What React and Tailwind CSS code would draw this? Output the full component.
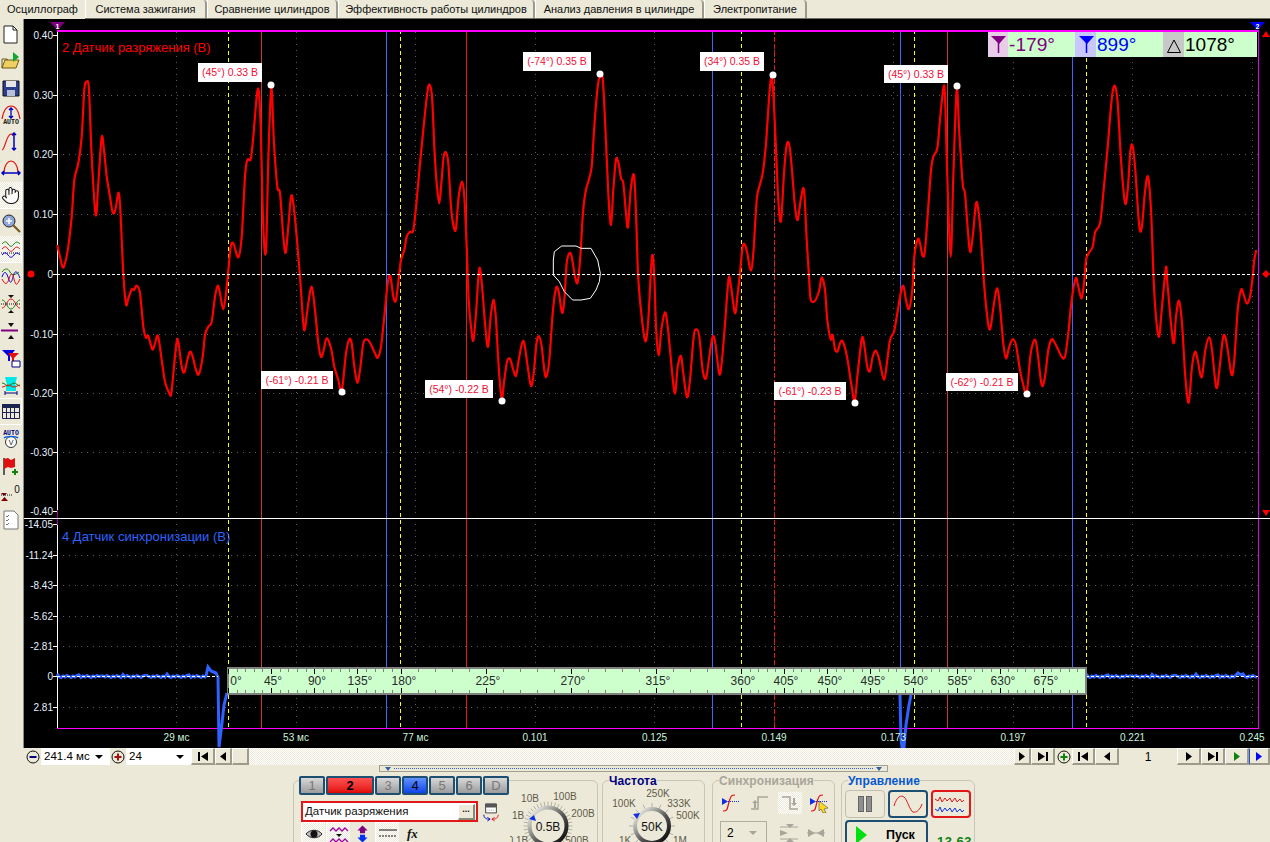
import { Hand } from 'lucide-react'

// raw points were read from 3x crops, so convert back to page pixels
const crop = (ox, pts) => {
  const out = []
  for (let i = 0; i < pts.length; i += 2) out.push([ox + pts[i] / 3, 60 + pts[i + 1] / 3])
  return out
}

// catmull-rom through the sampled points, the scope draws a smoothed line
const smooth = (pts) => {
  let d = `M${pts[0][0]} ${pts[0][1]}`
  for (let i = 0; i < pts.length - 1; i++) {
    const p0 = pts[i - 1] || pts[i]
    const p1 = pts[i]
    const p2 = pts[i + 1]
    const p3 = pts[i + 2] || p2
    const c1x = p1[0] + (p2[0] - p0[0]) / 6
    const c1y = p1[1] + (p2[1] - p0[1]) / 6
    const c2x = p2[0] - (p3[0] - p1[0]) / 6
    const c2y = p2[1] - (p3[1] - p1[1]) / 6
    d += `C${c1x.toFixed(1)} ${c1y.toFixed(1)} ${c2x.toFixed(1)} ${c2y.toFixed(1)} ${p2[0].toFixed(1)} ${p2[1].toFixed(1)}`
  }
  return d
}

const CYCLE_A = [52,555,60,590,68,622,75,610,85,560,95,470,103,360,115,310,125,230,133,90,140,65,147,90,155,290,167,465,175,370,185,232,192,270,200,350,210,410,218,457,226,450,236,398,242,470,250,640,258,733,265,715,275,688,282,690,290,677,300,700,310,800,318,833,325,828,337,868,345,850,354,828,365,900,375,965,388,1000,394,1000,402,920,410,845,415,845,425,920,433,937,442,900,450,875,458,890,468,930,477,942,488,890,495,825,505,800,515,785,525,710,533,677,540,700,550,748,558,700,566,620,572,560,580,550,595,592,605,530,615,350,622,300,632,297,640,230,650,110,656,93,662,200,670,500,678,572,685,300,694,85,702,250,712,380,720,400,730,530,737,578,745,500,753,410,760,430,770,530,780,650,790,790,795,805,805,730,815,680,825,750,835,850,843,890,850,875,860,835,873,865,883,920,895,960,905,995,918,880,928,838,935,850,943,920,952,968,960,930,970,850,980,838,990,848,1005,880,1013,893,1023,860,1033,770,1043,670,1051,648,1060,710,1068,720,1078,640]
const CYCLE_B = [15,600,25,570,32,530,42,515,52,510,62,420,72,310,85,180,95,90,101,75,108,110,115,260,122,370,130,430,136,370,143,290,150,278,157,310,165,440,173,500,180,505,188,410,198,365,205,410,212,560,218,720,225,800,232,842,240,760,248,640,253,630,260,700,268,800,276,860,284,770,293,720,300,780,308,920,317,1015,325,960,333,905,342,897,352,930,360,947,368,900,378,850,385,850,395,920,405,978,413,940,422,845,430,830,437,860,445,930,451,950,460,900,470,760,480,685,488,695,498,758,505,720,512,610,520,580,527,590,537,650,545,667,553,590,560,470,568,400,578,360,587,320,595,200,605,80,612,50,620,55,628,200,637,400,645,495,652,390,660,298,668,312,675,355,682,370,690,460,696,500,704,390,714,345,720,460,726,640,733,730,743,820,750,842,757,780,768,590,775,650,780,800,788,885,796,810,807,757,815,800,822,870,836,1000,845,920,855,888,862,940,873,1012,882,960,893,830,902,808,910,830,920,930,930,955,940,890,950,830,958,850,970,942,978,900,988,780,998,655,1005,680,1017,760,1025,700]
const CYCLE_C = [0,640,8,560,15,555,22,580,32,632,40,580,50,420,58,380,68,340,78,250,90,80,97,60,105,200,115,420,123,482,132,340,140,255,148,255,155,320,165,440,173,480,182,420,192,390,200,540,207,650,212,718,225,722,238,690,245,652,255,690,262,780,272,838,278,825,285,868,293,873,302,845,310,848,322,895,335,980,344,1025,352,950,365,838,372,850,382,920,390,933,398,890,408,872,418,900,432,960,442,900,450,840,462,815,472,760,482,700,490,677,498,720,507,747,517,690,523,590,533,538,540,550,548,588,555,570,565,440,573,330,580,290,592,265,600,180,610,85,615,110,622,350,632,590,640,350,650,90,658,220,668,370,675,400,682,490,690,575,698,530,708,430,715,450,722,520,733,680,745,795,752,800,762,730,772,685,780,740,790,850,798,895,808,860,818,838,828,855,840,930,850,975,860,1000,872,880,885,838,893,880,905,975,915,950,925,870,935,838,945,850,955,870,965,890,975,890,985,820,995,720,1007,655,1015,680,1025,715,1033,660]
const CYCLE_D = [0,600,8,580,20,560,28,515,42,490,52,400,65,260,78,110,87,78,95,130,105,300,117,428,125,390,133,275,140,258,148,330,160,498,168,498,177,395,186,350,195,450,205,700,218,830,228,740,240,622,245,680,262,848,270,770,279,722,288,790,298,950,308,1028,318,920,327,875,335,900,347,952,358,870,369,832,378,870,391,983,400,930,410,840,417,827,425,870,437,945,445,900,455,750,465,690,472,700,482,730,492,710,500,650,505,600,511,570]
const GESTURE = [472,600,475,575,497,558,540,558,555,565,585,565,605,600,613,640,610,665,600,690,583,715,555,720,530,720,505,695,490,665,472,645,472,600]

const trace = smooth([...crop(40, CYCLE_A), ...crop(396, CYCLE_B), ...crop(740, CYCLE_C), ...crop(1086, CYCLE_D)])
const gesture = crop(396, GESTURE).map((p) => p.join(',')).join(' ')

const noise = (from, to) => {
  const pts = []
  for (let x = from, i = 0; x < to; x += 2, i++) pts.push(`${x},${676.5 + ((i * 7) % 5) * 0.5 - 1 + (i % 11 === 0 ? -1.5 : 0)}`)
  return pts
}
const syncLeft = [...noise(57, 206), '206,676', '208,667', '211,671', '216,673', '218,677', '219,747', '222,723', '224,705', '227,693'].join(' ')
const syncMid = '900,695 901,740 902,747 904,747 906,725 909,705 911,695'
const syncRight = [...noise(1086, 1236), '1236,675', '1238,673', '1241,675', ...noise(1243, 1258)].join(' ')

const Y_TOP = [['0.40', 35], ['0.30', 95.5], ['0.20', 154.5], ['0.10', 214], ['0', 274], ['-0.10', 334], ['-0.20', 393], ['-0.30', 452], ['-0.40', 511]]
const Y_BOTTOM = [['-14.05', 524], ['-11.24', 555], ['-8.43', 585], ['-5.62', 616], ['-2.81', 646], ['0', 676], ['2.81', 707]]
const X_AXIS = [['29 мс', 176.5], ['53 мс', 296], ['77 мс', 415.5], ['0.101', 535], ['0.125', 654.5], ['0.149', 774], ['0.173', 893.5], ['0.197', 1013], ['0.221', 1132.5], ['0.245', 1252]]
const MARKS = [
  { x: 198, y: 63, w: 64, h: 19, t: '(45°) 0.33 В', dx: 271, dy: 85 },
  { x: 261, y: 371, w: 72, h: 18, t: '(-61°) -0.21 В', dx: 342, dy: 392 },
  { x: 523, y: 52, w: 68, h: 19, t: '(-74°) 0.35 В', dx: 600, dy: 74 },
  { x: 425, y: 380, w: 68, h: 18, t: '(54°) -0.22 В', dx: 502, dy: 401 },
  { x: 700, y: 52, w: 64, h: 19, t: '(34°) 0.35 В', dx: 773, dy: 75 },
  { x: 774, y: 382, w: 72, h: 18, t: '(-61°) -0.23 В', dx: 855, dy: 403 },
  { x: 884, y: 65, w: 64, h: 18, t: '(45°) 0.33 В', dx: 957, dy: 86 },
  { x: 946, y: 373, w: 72, h: 18, t: '(-62°) -0.21 В', dx: 1027, dy: 394 },
]
const RULER = [['0°', 236], ['45°', 273], ['90°', 317], ['135°', 360], ['180°', 404], ['225°', 488], ['270°', 573], ['315°', 658], ['360°', 743], ['405°', 786], ['450°', 830], ['495°', 873], ['540°', 916], ['585°', 960], ['630°', 1003], ['675°', 1046]]

const rulerTicks = []
const addTicks = (start, step, n) => {
  for (let i = 0; i < n; i++) {
    for (let j = 0; j < 5; j++) rulerTicks.push({ x: Math.round(start + step * i + (step / 5) * j), major: j === 0 })
  }
}
addTicks(228, 43.1, 4)
addTicks(400.5, 85.2, 4)
addTicks(741, 43.1, 8)

function Chart() {
  return (
    <svg width="1246" height="729" viewBox="24 19 1246 729" className="block bg-black">
      <g shapeRendering="crispEdges">
        {Y_TOP.filter((r) => r[0] !== '0' && r[0] !== '0.40' && r[0] !== '-0.40').map((r) => (
          <line key={r[0]} x1="57" x2="1258" y1={r[1]} y2={r[1]} stroke="#5c5c5c" strokeDasharray="1 5" />
        ))}
        {Y_BOTTOM.filter((r) => r[0] !== '0' && r[0] !== '-14.05').map((r) => (
          <line key={r[0]} x1="57" x2="1258" y1={r[1]} y2={r[1]} stroke="#5c5c5c" strokeDasharray="1 5" />
        ))}
        {X_AXIS.map((r) => (
          <line key={r[0]} x1={r[1]} x2={r[1]} y1="32" y2="733" stroke="#5c5c5c" strokeDasharray="1 5" />
        ))}
        {[261.5, 947.5].map((x) => <line key={x} x1={x} x2={x} y1="30" y2="728" stroke="#c83838" />)}
        <line x1="466.5" x2="466.5" y1="30" y2="728" stroke="#e81818" />
        <line x1="774.5" x2="774.5" y1="30" y2="728" stroke="#e81818" strokeDasharray="5 2" />
        {[386.5, 712.5, 900.5, 1072.5].map((x) => <line key={x} x1={x} x2={x} y1="30" y2="728" stroke="#3a66ff" />)}
        {[228.5, 400.5, 741.5, 914.5, 1086.5].map((x) => <line key={x} x1={x} x2={x} y1="30" y2="728" stroke="#ffff00" strokeDasharray="4 3" />)}
        <line x1="57.5" x2="57.5" y1="30" y2="510" stroke="#fff" />
        <line x1="57.5" x2="57.5" y1="510" y2="525" stroke="#a000a0" />
        <line x1="57.5" x2="57.5" y1="525" y2="728" stroke="#fff" />
        <line x1="57" x2="1259" y1="30.5" y2="30.5" stroke="#ff00ff" strokeWidth="2" />
        <line x1="57" x2="1259" y1="728.5" y2="728.5" stroke="#ff00ff" />
        <line x1="1258.5" x2="1258.5" y1="30" y2="729" stroke="#e000ff" strokeWidth="1" />
        <line x1="24" x2="1270" y1="518.5" y2="518.5" stroke="#fff" />
        {Y_TOP.map((r) => <line key={r[0]} x1="53" x2="57" y1={r[1]} y2={r[1]} stroke="#fff" />)}
        {Y_BOTTOM.map((r) => <line key={r[0]} x1="53" x2="57" y1={r[1]} y2={r[1]} stroke="#fff" />)}
      </g>

      <path d={trace} fill="none" stroke="#ff0000" strokeWidth="2.2" strokeLinejoin="round" />
      <polyline points={gesture} fill="none" stroke="#fff" strokeWidth="1" />
      <line x1="57" x2="1258" y1="274" y2="274" stroke="#fff" strokeWidth="1" strokeDasharray="3 2" shapeRendering="crispEdges" />

      <polyline points={syncLeft} fill="none" stroke="#2f62ff" strokeWidth="3" />
      <polyline points={syncMid} fill="none" stroke="#2f62ff" strokeWidth="3" />
      <polyline points={syncRight} fill="none" stroke="#2f62ff" strokeWidth="3" />
      <line x1="57" x2="218" y1="676.5" y2="676.5" stroke="#fff" strokeDasharray="3 2" shapeRendering="crispEdges" />
      <line x1="1086" x2="1258" y1="676.5" y2="676.5" stroke="#fff" strokeDasharray="3 2" shapeRendering="crispEdges" />

      {/* degree ruler sits on top of the traces */}
      <rect x="228" y="668" width="858" height="26" fill="#ccffcc" stroke="#808080" strokeWidth="2" />
      <g shapeRendering="crispEdges">
        {rulerTicks.map((t) => (
          <g key={t.x} stroke={t.major ? '#000' : '#808080'}>
            <line x1={t.x} x2={t.x} y1="669" y2={t.major ? 674 : 672} />
            <line x1={t.x} x2={t.x} y1={t.major ? 688 : 690} y2="693" />
          </g>
        ))}
      </g>
      {RULER.map((r) => (
        <text key={r[0]} x={r[1]} y="685" fontSize="12" textAnchor="middle" fill="#2a2a2a">{r[0]}</text>
      ))}

      {Y_TOP.map((r) => <text key={r[0]} x="53" y={r[1] + 3.5} fontSize="10" textAnchor="end" fill="#e6f0ff">{r[0]}</text>)}
      {Y_BOTTOM.map((r) => <text key={r[0]} x="53" y={r[1] + 3.5} fontSize="10" textAnchor="end" fill="#e6f0ff">{r[0]}</text>)}
      {X_AXIS.map((r) => <text key={r[0]} x={r[1]} y="741" fontSize="10" textAnchor="middle" fill="#cdf2dc">{r[0]}</text>)}

      <text x="62" y="52" fontSize="13" fill="#ff0000">2 Датчик разряжения (В)</text>
      <text x="62" y="541" fontSize="13" fill="#2f62ff">4 Датчик синхронизации (В)</text>

      {MARKS.map((m) => (
        <g key={m.dx}>
          <rect x={m.x} y={m.y} width={m.w} height={m.h} fill="#fff" />
          <text x={m.x + m.w / 2} y={m.y + m.h / 2 + 3.5} fontSize="10.5" textAnchor="middle" fill="#f01038">{m.t}</text>
          <circle cx={m.dx} cy={m.dy} r="3.5" fill="#fff" />
        </g>
      ))}

      {/* channel and cursor markers */}
      <polygon points="50,22 65,22 57.5,30" fill="#800080" />
      <text x="57.5" y="29" fontSize="7" fontWeight="bold" textAnchor="middle" fill="#fff">1</text>
      <polygon points="1250,22 1265,22 1257.5,30" fill="#0000ff" />
      <text x="1257.5" y="29" fontSize="7" fontWeight="bold" textAnchor="middle" fill="#fff">2</text>
      <polygon points="1262,37 1270,37 1266,31" fill="#ff0000" />
      <polygon points="1262,510 1270,510 1266,516" fill="#ff0000" />
      <polygon points="1266,270 1270,274 1266,278 1262,274" fill="#ff0000" />
      <circle cx="31" cy="274" r="3.5" fill="#ff0000" />

      {/* angle readout */}
      <rect x="988" y="32" width="269" height="25" fill="#ccffcc" />
      <rect x="988" y="32" width="20" height="25" fill="#e8cce8" />
      <rect x="1075" y="32" width="21" height="25" fill="#c8c8ff" />
      <rect x="1163" y="32" width="21" height="25" fill="#c8c8c8" />
      <polygon points="991,36 1006,36 999,44" fill="#800080" />
      <line x1="998.5" x2="998.5" y1="42" y2="53" stroke="#800080" strokeWidth="1.5" />
      <polygon points="1079,36 1094,36 1087,44" fill="#0000ff" />
      <line x1="1086.5" x2="1086.5" y1="42" y2="53" stroke="#0000ff" strokeWidth="1.5" />
      <polygon points="1167.5,52.5 1180.5,52.5 1174,40" fill="none" stroke="#000" />
      <text x="1009" y="51" fontSize="18" fill="#800080" textLength="46" lengthAdjust="spacingAndGlyphs">-179°</text>
      <text x="1097" y="51" fontSize="19" fill="#0000ff">899°</text>
      <text x="1185" y="51" fontSize="19" fill="#000">1078°</text>
    </svg>
  )
}

const TABS = [
  ['Система зажигания', 'w-[122px]'],
  ['Сравнение цилиндров', 'w-[131px]'],
  ['Эффективность работы цилиндров', 'w-[197px]'],
  ['Анализ давления в цилиндре', 'w-[169px]'],
  ['Электропитание', 'w-[103px]'],
]

function Tabs() {
  return (
    <div className="flex h-[19px] text-[11px] text-[#111] border-b border-[#6f6f66]">
      <div className="w-[85px] h-[19px] flex items-center justify-center bg-[#ece9d8] z-10">Осциллограф</div>
      {TABS.map(([label, width]) => (
        <div key={label} className={`${width} h-[18px] flex items-center justify-center bg-[#ece9d8] border-l border-white border-r-2 border-r-[#9a9a8e] rounded-tr-sm`}>
          {label}
        </div>
      ))}
    </div>
  )
}

function Ico({ children, selected }) {
  return (
    <div className={`h-[27px] w-[22px] flex items-center justify-center ${selected ? "bg-[repeating-conic-gradient(#ece9d8_0_25%,#ffffff_0_50%)] bg-[length:2px_2px] border-r border-b border-white" : ''}`}>
      <svg width="20" height="20" viewBox="0 0 20 20" fill="none">{children}</svg>
    </div>
  )
}

function Toolbar() {
  return (
    <div className="w-[24px] h-[729px] shrink-0 flex flex-col pt-px border-r border-[#8c8c80] overflow-hidden">
      <Ico><path d="M3 2h9l4 4v13H3z" fill="#fff" stroke="#222" /><path d="M12 2v4h4" stroke="#222" /></Ico>
      <Ico><path d="M1 17l3-8h14l-3 8z" fill="#f0d060" stroke="#6b5a10" /><path d="M1 17V8h5l1 1" stroke="#6b5a10" /><path d="M12 1l6 5-6 5z" fill="#10a830" /></Ico>
      <Ico><path d="M2 3h16v15H2z" fill="#2b3f8f" stroke="#111" /><path d="M5 3h10v6H5z" fill="#e6e6e6" /><path d="M6 12h8v6H6z" fill="#b8c0d8" /></Ico>
      <Ico><path d="M1 14C3 3 7 1 10 1s7 2 9 13" stroke="#e01010" strokeWidth="1.2" /><path d="M10 3v10M8 5l2-2 2 2M8 11l2 2 2-2" stroke="#0000c0" strokeWidth="1.3" /><text x="10" y="19" fontSize="6.5" fontWeight="bold" textAnchor="middle" fill="#111" fontFamily="Liberation Mono">AUTO</text></Ico>
      <Ico><path d="M1 18C4 18 5 3 10 2c1 0 2 1 2 2" stroke="#e01010" strokeWidth="1.2" /><path d="M13 1v17M11 3l2-2 2 2M11 16l2 2 2-2" stroke="#0000c0" strokeWidth="1.5" /></Ico>
      <Ico><path d="M3 14C3 6 7 2 10 2s7 4 7 12" stroke="#e01010" strokeWidth="1.2" /><path d="M1 14h18M3 12l-2 2 2 2M17 12l2 2-2 2" stroke="#0000c0" strokeWidth="1.5" /></Ico>
      <div className="h-[27px] w-[22px] flex items-center justify-center bg-[repeating-conic-gradient(#ece9d8_0_25%,#ffffff_0_50%)] bg-[length:2px_2px] border-r border-b border-white">
        <Hand size={19} strokeWidth={1.3} color="#111" fill="#fff" />
      </div>
      <Ico><circle cx="8" cy="8" r="6" fill="#8fa6d8" stroke="#222" /><path d="M5 8h6M8 5v6" stroke="#fff" strokeWidth="1.5" /><path d="M12 12l7 7" stroke="#7a5a20" strokeWidth="2.2" /></Ico>
      <Ico selected><path d="M1 5c3-3 4-3 6 0s4 3 6 0 4-2 6 0" stroke="#108010" /><path d="M1 10c3-3 4-3 6 0s4 3 6 0 4-2 6 0" stroke="#e01010" /><path d="M0 14h20" stroke="#111" strokeDasharray="1 1" /><path d="M1 16c3-3 4-3 6 0s4 3 6 0 4-2 6 0" stroke="#0000e0" /></Ico>
      <Ico><path d="M1 5c3-4 6-4 8 0s5 3 9 0" stroke="#108010" /><path d="M1 10c2-6 4-6 6 0s3 8 5 0 4-6 7 1" stroke="#0000e0" /><path d="M1 12c3 6 5 6 7 0s3-8 5 0 3 6 6 0" stroke="#e01010" /></Ico>
      <Ico><path d="M7 1h6l-3 3zM7 19h6l-3-3z" fill="#111" /><path d="M1 6c4 0 5 9 9 9s5-9 9-9" stroke="#108010" /><path d="M1 14c4 0 5-9 9-9s5 9 9 9" stroke="#e01010" /><path d="M0 10h20" stroke="#111" strokeDasharray="1 1" /></Ico>
      <Ico><path d="M7 2h6l-3 4zM7 18h6l-3-4z" fill="#111" /><path d="M0 9.500h17" stroke="#800080" strokeWidth="2" /></Ico>
      <Ico><path d="M1 2h13l-5 6v5H7V8z" fill="#0000e0" /><path d="M7 5h11l-5 5v7h-2v-7z" fill="#e01010" /><path d="M11 13h8v6h-8z" fill="#fff" stroke="#000080" /></Ico>
      <Ico><path d="M4 2h12l-2 8h-8z" fill="#00e8e8" /><path d="M5 10h10v6H5z" fill="#00e8e8" /><path d="M1 8c3 0 4 3 6 3s4-3 6-3 4 3 6 3" stroke="#108010" /><path d="M1 12c3 0 4-2 6-2s4 2 6 2 4-2 6-2" stroke="#e01010" /><path d="M4 18h12M4 16v4M16 16v4" stroke="#000080" /></Ico>
      <div className="h-[27px] w-[22px] flex items-center justify-center border-t border-r border-b border-white">
        <svg width="18" height="15" viewBox="0 0 18 15" fill="none"><path d="M.5.500h17v14H.5z" stroke="#1c2350" /><path d="M0 0h18v4H0z" fill="#1c2350" /><path d="M4.500 4v11M8.500 4v11M12.500 4v11M.5 8.500h17" stroke="#1c2350" /></svg>
      </div>
      <Ico><text x="10" y="6" fontSize="6.5" fontWeight="bold" textAnchor="middle" fill="#000080" fontFamily="Liberation Mono">AUTO</text><circle cx="10" cy="13" r="5.500" fill="#fff" stroke="#333" /><path d="M3 9c2-2 12-2 14 0" stroke="#1060e0" strokeWidth="1.500" /><text x="10" y="16" fontSize="7" textAnchor="middle" fill="#111">V</text></Ico>
      <Ico><path d="M3 2v17" stroke="#111" strokeWidth="1.300" /><path d="M3 3l4-1 3 2 4-2v9l-4 1-3-1-4 2z" fill="#e01010" /><path d="M14 13v6M11 16h6" stroke="#108010" strokeWidth="2" /></Ico>
      <Ico><text x="16" y="10" fontSize="10" textAnchor="middle" fill="#111">0</text><path d="M0 10l6 0-3 3z" fill="#800000" /><path d="M0 12h12" stroke="#111" strokeDasharray="1 1" /><path d="M0 18h7l-3.500-4z" fill="#800000" /></Ico>
      <Ico><path d="M3 1h10l4 4v14H3z" fill="#fff" stroke="#777" /><path d="M5 6l1 1 2-2M5 10l1 1 2-2M5 14l1 1 2-2" stroke="#777" /></Ico>
    </div>
  )
}

const DITHER = 'bg-[repeating-conic-gradient(#ece9d8_0_25%,#ffffff_0_50%)] bg-[length:2px_2px]'

function Glyph({ kind, color = '#000' }) {
  return (
    <svg width="12" height="9" viewBox="0 0 12 9">
      {kind === 'first' && <path d="M1 0h2v9H1zM11 0v9L4 4.500z" fill={color} />}
      {kind === 'prev' && <path d="M9 0v9L3 4.500z" fill={color} />}
      {kind === 'next' && <path d="M3 0v9l6-4.500z" fill={color} />}
      {kind === 'last' && <path d="M1 0v9l7-4.500zM9 0h2v9H9z" fill={color} />}
    </svg>
  )
}

function NavBtn({ kind, color, className }) {
  return (
    <div className={`${className} h-[17px] flex items-center justify-center bg-[#ece9d8] border-t border-l border-white border-r-2 border-b-2 border-r-[#9d9b8c] border-b-[#9d9b8c]`}>
      {kind && <Glyph kind={kind} color={color} />}
    </div>
  )
}

function RoundBtn({ color, plus, className }) {
  return (
    <div className={`${className} h-[17px] flex items-center justify-center`}>
      <svg width="14" height="14" viewBox="0 0 14 14" fill="none">
        <circle cx="7" cy="7" r="6" fill="#ece9d8" stroke="#111" />
        <path d={plus ? 'M3.500 7h7M7 3.500v7' : 'M3.500 7h7'} stroke={color} strokeWidth="2" />
      </svg>
    </div>
  )
}

function Combo({ value, className }) {
  return (
    <div className={`${className} h-[17px] bg-white flex items-center justify-between pl-[3px] pr-[7px] text-[11.5px] text-black`}>
      <span>{value}</span>
      <svg width="8" height="4" viewBox="0 0 8 4"><path d="M0 0h8L4 4z" fill="#000" /></svg>
    </div>
  )
}

function NavRow() {
  return (
    <div className="flex h-[17px] pl-[24px] items-start">
      <RoundBtn color="#000080" className="w-[17px]" />
      <Combo value="241.4 мс" className="w-[69px]" />
      <RoundBtn color="#a01010" plus className="w-[16px]" />
      <Combo value="24" className="w-[65px]" />
      <NavBtn kind="first" className="w-[24px]" />
      <NavBtn kind="prev" className="w-[17px]" />
      <NavBtn className="w-[17px]" />
      <div className={`flex-1 h-[17px] ${DITHER}`} />
      <NavBtn kind="next" className="w-[17px]" />
      <NavBtn kind="last" className="w-[24px]" />
      <RoundBtn color="#108010" plus className="w-[17px]" />
      <NavBtn kind="first" className="w-[23px]" />
      <NavBtn kind="prev" className="w-[24px]" />
      <div className="w-[58px] h-[17px] flex items-center justify-center text-[12px] text-black">1</div>
      <NavBtn kind="next" className="w-[24px]" />
      <NavBtn kind="last" className="w-[24px]" />
      <NavBtn kind="next" color="#108010" className="w-[24px]" />
      <NavBtn kind="next" color="#0000ff" className="w-[21px] border-l-[#2050e0]" />
    </div>
  )
}

function SliderBar() {
  return (
    <div className="ml-[379px] w-[509px] h-[7px] bg-[#ece9d8] border border-[#a0a090] flex items-center px-[5px] gap-[3px]">
      <svg width="6" height="4" viewBox="0 0 6 4" className="shrink-0"><path d="M0 0h6L3 4z" fill="#3060a0" /></svg>
      <div className="flex-1 border-t border-dotted border-[#3060d0]" />
      <svg width="6" height="4" viewBox="0 0 6 4" className="shrink-0"><path d="M0 0h6L3 4z" fill="#3060a0" /></svg>
    </div>
  )
}

const CHANNELS = [
  ['1', 'w-[26px]', 'from-[#d8d8d8] to-[#9c9c9c] text-[#777] font-normal'],
  ['2', 'w-[48px]', 'from-[#ff5050] to-[#e00000] text-black font-bold'],
  ['3', 'w-[26px]', 'from-[#d8d8d8] to-[#9c9c9c] text-[#777] font-normal'],
  ['4', 'w-[26px]', 'from-[#6090ff] to-[#1040e8] text-black font-normal'],
  ['5', 'w-[26px]', 'from-[#d8d8d8] to-[#9c9c9c] text-[#777] font-normal'],
  ['6', 'w-[26px]', 'from-[#d8d8d8] to-[#9c9c9c] text-[#777] font-normal'],
  ['D', 'w-[26px]', 'from-[#d8d8d8] to-[#9c9c9c] text-[#777] font-normal'],
]

function Group({ className, title, titleColor, children }) {
  return (
    <div className={`${className} relative h-[80px] border border-[#c8c6b6] rounded-md shrink-0`}>
      {title && (
        <div className={`${titleColor} absolute -top-[7px] left-[6px] bg-[#ece9d8] text-[12px] font-bold tracking-[0.1px] leading-[14px]`}>
          {title}
        </div>
      )}
      {children}
    </div>
  )
}

function Knob({ cx, cy, r, label, id, hatch, pointer, labels, width }) {
  const ticks = []
  for (let a = 0; a < 360; a += hatch ? 9 : 22.5) {
    const rad = (a * Math.PI) / 180
    ticks.push(
      <line key={a} x1={cx + Math.cos(rad) * (r + 1)} y1={cy + Math.sin(rad) * (r + 1)} x2={cx + Math.cos(rad) * (r + 6)} y2={cy + Math.sin(rad) * (r + 6)} stroke="#b4b2a4" />
    )
  }
  return (
    <svg width={width} height="62" viewBox={`0 0 ${width} 62`} className="block">
      <defs>
        <linearGradient id={id} x1="0" y1="0" x2="1" y2="1">
          <stop offset="0.1" stopColor="#e8e8e0" />
          <stop offset="0.55" stopColor="#555" />
          <stop offset="1" stopColor="#000" />
        </linearGradient>
      </defs>
      {ticks}
      <circle cx={cx} cy={cy} r={r} fill="#ece9d8" stroke={`url(#${id})`} strokeWidth="4" />
      <polygon points={pointer} fill="#1030e0" />
      <text x={cx} y={cy + 4.5} fontSize="12" textAnchor="middle" fill="#111">{label}</text>
      {labels.map((l) => (
        <text key={l[0]} x={l[1]} y={l[2]} fontSize="10" textAnchor="middle" fill="#5f5a48">{l[0]}</text>
      ))}
    </svg>
  )
}

function SmallIcon({ className, children, dither, width = 20, height = 20 }) {
  return (
    <div className={`${className} flex items-center justify-center ${dither ? DITHER : ''}`}>
      <svg width={width} height={height} viewBox="0 0 20 20" fill="none">{children}</svg>
    </div>
  )
}

function ChannelGroup() {
  return (
    <Group className="w-[305px]">
      <div className="flex items-start">
        <div className="w-[216px] pl-[5px] -mt-[5px]">
          <div className="flex gap-px">
            {CHANNELS.map(([n, w, tone]) => (
              <div key={n} className={`${w} h-[19px] flex items-center justify-center text-[13px] leading-none rounded-[2px] border-2 border-[#1d4f73] bg-gradient-to-b ${tone}`}>
                {n}
              </div>
            ))}
          </div>
          <div className="flex mt-[6px] items-center">
            <div className="ml-[2px] w-[177px] h-[21px] border-2 border-[#e01818] bg-white flex items-center justify-between pl-[2px] pr-px text-[11.5px] text-[#111]">
              <span>Датчик разряжения</span>
              <div className="w-[17px] h-[16px] bg-[#ece9d8] border-t border-l border-white border-r-2 border-b-2 border-r-[#8a887a] border-b-[#8a887a] flex items-center justify-center text-[9px] font-bold leading-none pb-1">...</div>
            </div>
            <SmallIcon className="ml-[4px] w-[18px] h-[20px]">
              <path d="M4 1h12v10H4z" fill="#fff" stroke="#333" />
              <path d="M4 1h12v4H4z" fill="#555" />
              <path d="M6 8h8" stroke="#999" strokeDasharray="1 1" />
              <path d="M2 13c0 5 5 5 7 5M6 16l3 2-3 2" stroke="#0000c0" />
              <path d="M18 13c0 5-5 5-7 5M14 16l-3 2 3 2" stroke="#e01010" />
            </SmallIcon>
          </div>
          <div className="flex items-start ml-[2px] mt-0">
            <SmallIcon className="w-[24px] h-[24px] border-t border-l border-white" dither>
              <path d="M2 9c4-5 12-5 16 0-4 5-12 5-16 0z" fill="#bbb" stroke="#222" /><circle cx="10" cy="9" r="3.500" fill="#111" />
            </SmallIcon>
            <SmallIcon className="ml-px w-[24px] h-[24px] border-t border-l border-white" dither>
              <path d="M1 6l3-3 3 3 3-3 3 3 3-3 3 3" stroke="#a000a0" strokeWidth="1.300" /><path d="M7 9h6l-3 3z" fill="#111" /><path d="M1 17l3-3 3 3 3-3 3 3 3-3 3 3" stroke="#a000a0" strokeWidth="1.300" />
            </SmallIcon>
            <SmallIcon className="ml-[4px] w-[17px] h-[24px]">
              <path d="M10 0l6 6h-3v3H7V6H4z" fill="#800080" /><path d="M10 20l6-6h-3v-3H7v3H4z" fill="#0030f0" />
            </SmallIcon>
            <SmallIcon className="ml-[4px] w-[24px] h-[24px] border-t border-l border-white" dither>
              <path d="M1 5h18" stroke="#111" /><path d="M1 11h18" stroke="#111" strokeDasharray="2 1" />
            </SmallIcon>
            <div className="ml-[8px] h-[24px] flex items-center font-['Liberation_Serif',serif] italic font-bold text-[13px] text-[#111]">fx</div>
          </div>
        </div>
        <div className="mt-[4px]">
          <Knob
            id="knobA"
            width={87}
            cx={38}
            cy={41}
            r={18.5}
            hatch
            label="0.5В"
            pointer="19,34 24,30 26,36"
            labels={[['10В', 20, 16.5], ['100В', 55, 14.5], ['200В', 73, 31.5], ['1В', 8, 33.5], ['500В', 67, 59], ['0.1В', 8, 59]]}
          />
        </div>
      </div>
    </Group>
  )
}

function FreqGroup() {
  return (
    <Group className="w-[103px]" title="Частота" titleColor="text-[#000080]">
      <div className="mt-[4px]">
        <Knob
          id="knobB"
          width={101}
          cx={49}
          cy={41}
          r={17}
          label="50K"
          pointer="30,29 37,28 34,34"
          labels={[['250K', 55, 11.5], ['100K', 21, 21.5], ['333K', 76, 21.5], ['500K', 85, 33.5], ['1K', 22, 59], ['1M', 77, 59]]}
        />
      </div>
    </Group>
  )
}

function SyncGroup() {
  return (
    <Group className="w-[123px]" title="Синхронизация" titleColor="text-[#a8a69a]">
      <div className="flex items-center pl-[9px] pt-[11px] gap-[8px]">
        <SmallIcon className="w-[20px] h-[20px]">
          <path d="M1 18c5 0 4-2 6-9s3-7 6-7" stroke="#e01010" strokeWidth="1.200" /><path d="M0 5l6 3.500-6 3.500z" fill="#1030e0" /><path d="M6 8.500h12" stroke="#1030e0" strokeDasharray="1 1" />
        </SmallIcon>
        <SmallIcon className="w-[20px] h-[20px]">
          <path d="M1 16h7V4h10" stroke="#a8a69a" strokeWidth="1.500" /><path d="M5 7l-3 3h2v5h2v-5h2z" fill="#a8a69a" />
        </SmallIcon>
        <SmallIcon className="w-[24px] h-[22px]" dither>
          <path d="M2 4h8v12h8" stroke="#a8a69a" strokeWidth="1.500" /><path d="M14 13l-3-3h2V5h2v5h2z" fill="#a8a69a" />
        </SmallIcon>
        <SmallIcon className="w-[20px] h-[20px]">
          <path d="M1 18c5 0 4-2 6-9s3-7 6-7" stroke="#e01010" strokeWidth="1.200" /><path d="M0 5l6 3.500-6 3.500z" fill="#1030e0" /><path d="M6 8.500h12" stroke="#1030e0" strokeDasharray="1 1" /><path d="M9 8l9 7-4 1 2 4-3 0-2-4-2 2z" fill="#ffd820" stroke="#333" strokeWidth="0.500" />
        </SmallIcon>
      </div>
      <div className="flex items-center pl-[7px] mt-[7px]">
        <div className="w-[47px] h-[24px] border border-[#b0ae9e] flex items-center justify-between pl-[6px] pr-[9px] text-[12px] text-black">
          <span>2</span>
          <svg width="8" height="4" viewBox="0 0 8 4"><path d="M0 0h8L4 4z" fill="#a8a69a" /></svg>
        </div>
        <SmallIcon className="ml-[12px] w-[20px] h-[20px]">
          <path d="M1 4h18M1 16h18" stroke="#a8a69a" /><path d="M1 7l8 3-8 3zM7 1h8l-4 4zM7 19h8l-4-4z" fill="#a8a69a" />
        </SmallIcon>
        <SmallIcon className="ml-[7px] w-[20px] h-[20px]">
          <path d="M1 10h18" stroke="#a8a69a" /><path d="M2 6l7 4-7 4zM18 6l-7 4 7 4z" fill="#a8a69a" />
        </SmallIcon>
      </div>
    </Group>
  )
}

function ControlGroup() {
  return (
    <Group className="w-[134px]" title="Управление" titleColor="text-[#0858d0]">
      <div className="flex pl-[3px] pt-[9px] gap-[3px]">
        <div className="w-[40px] h-[28px] rounded-sm border border-[#c0beae] flex items-center justify-center gap-[2px]">
          <div className="w-[6px] h-[16px] bg-[#8f8f8f] border border-[#666]" />
          <div className="w-[6px] h-[16px] bg-[#8f8f8f] border border-[#666]" />
        </div>
        <div className="w-[40px] h-[28px] rounded-sm border-2 border-[#1d4f73] flex items-center justify-center">
          <svg width="30" height="20" viewBox="0 0 30 20" fill="none"><path d="M1 12C4 2 8 1 11 3s6 14 9 15 7-2 9-8" stroke="#e01818" /></svg>
        </div>
        <div className="w-[40px] h-[28px] rounded-sm border-2 border-[#e01818] flex items-center justify-center">
          <svg width="32" height="22" viewBox="0 0 32 22" fill="none"><path d="M0 6l3 2 2-4 2 5 3-4 2 3 3-3 2 4 3-4 2 4 3-3 2 3 2-2" stroke="#e01818" /><path d="M0 16l3 2 2-4 2 5 3-4 2 3 3-3 2 4 3-4 2 4 3-3 2 3 2-2" stroke="#1030e0" /></svg>
        </div>
      </div>
      <div className="flex pl-[3px] mt-[2px]">
        <div className="w-[83px] h-[30px] rounded-sm border-2 border-[#1d4f73] flex items-center text-[12.5px] font-bold text-black">
          <svg width="12" height="18" viewBox="0 0 12 18" className="ml-[9px]"><path d="M0 0l11 9-11 9z" fill="#00e010" /></svg>
          <span className="ml-[18px]">Пуск</span>
        </div>
        <div className="ml-[9px] mt-[15px] text-[13px] font-bold tracking-[0.5px] text-[#108010] leading-none">13.63</div>
      </div>
    </Group>
  )
}

export default function App() {
  return (
    <div className="w-[1270px] h-[842px] overflow-hidden bg-[#ece9d8] font-['Liberation_Sans',sans-serif]">
      <Tabs />
      <div className="flex h-[729px]">
        <Toolbar />
        <Chart />
      </div>
      <NavRow />
      <SliderBar />
      <div className="flex pl-[293px] mt-[8px] items-start">
        <ChannelGroup />
        <div className="w-[4px] shrink-0" />
        <FreqGroup />
        <div className="w-[7px] shrink-0" />
        <SyncGroup />
        <div className="w-[6px] shrink-0" />
        <ControlGroup />
      </div>
    </div>
  )
}
